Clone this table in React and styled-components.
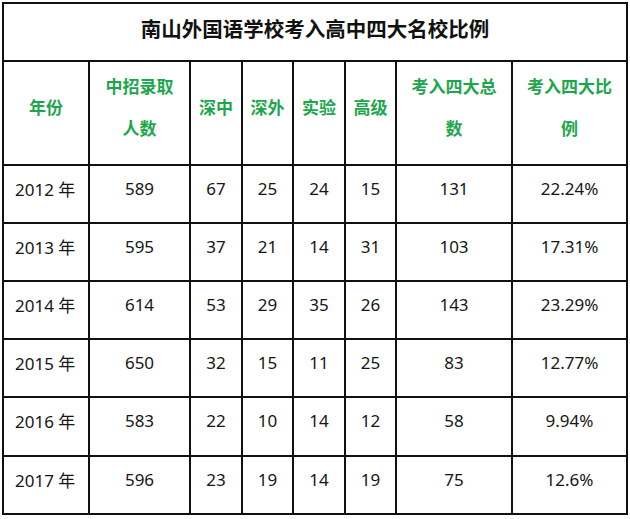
import React from "react";
import styled, { createGlobalStyle } from "styled-components";

const Global = createGlobalStyle`
  html, body { margin: 0; padding: 0; background: #fff; }
  body { font-family: "Noto Sans", "Noto Sans CJK SC", sans-serif; }
`;

const Page = styled.div`
  padding: 2px 0 0 2px;
`;

const Table = styled.table`
  border-collapse: collapse;
  table-layout: fixed;
  width: 624px;
  border: 2px solid #111;
`;

const TitleCell = styled.td`
  border: 2px solid #111;
  height: 58px;
  padding: 0 0 9px;
  box-sizing: border-box;
  text-align: center;
  vertical-align: middle;
  font-family: "Noto Sans CJK SC", sans-serif;
  font-weight: 700;
  font-size: 20.5px;
  color: #111;
`;

const HeadCell = styled.th`
  border: 2px solid #111;
  height: 104px;
  padding: 0 0 12px;
  box-sizing: border-box;
  text-align: center;
  vertical-align: middle;
  font-family: "Noto Sans CJK SC", sans-serif;
  font-weight: 700;
  font-size: 17px;
  line-height: 42px;
  color: #1ea64c;
`;

const Cell = styled.td`
  border: 2px solid #111;
  height: ${(p) => p.$h || 58}px;
  padding: 0 0 12px ${(p) => (p.$left ? "11px" : "0")};
  box-sizing: border-box;
  text-align: ${(p) => (p.$left ? "left" : "center")};
  vertical-align: middle;
  font-family: "Noto Sans", "Noto Sans CJK SC", sans-serif;
  font-size: 17px;
  color: #161616;
  white-space: nowrap;
`;

const widths = [86, 101, 52, 51, 52, 51, 116, 115];

const headers = [
  ["年份"],
  ["中招录取", "人数"],
  ["深中"],
  ["深外"],
  ["实验"],
  ["高级"],
  ["考入四大总", "数"],
  ["考入四大比", "例"],
];

const rows = [
  ["2012 年", "589", "67", "25", "24", "15", "131", "22.24%"],
  ["2013 年", "595", "37", "21", "14", "31", "103", "17.31%"],
  ["2014 年", "614", "53", "29", "35", "26", "143", "23.29%"],
  ["2015 年", "650", "32", "15", "11", "25", "83", "12.77%"],
  ["2016 年", "583", "22", "10", "14", "12", "58", "9.94%"],
  ["2017 年", "596", "23", "19", "14", "19", "75", "12.6%"],
];

export default function App() {
  return (
    <Page>
      <Global />
      <Table>
        <colgroup>
          {widths.map((w, i) => (
            <col key={i} style={{ width: w }} />
          ))}
        </colgroup>
        <tbody>
          <tr>
            <TitleCell colSpan={8}>南山外国语学校考入高中四大名校比例</TitleCell>
          </tr>
          <tr>
            {headers.map((h, i) => (
              <HeadCell key={i}>
                {h.map((line, j) => (
                  <React.Fragment key={j}>
                    {j > 0 && <br />}
                    {line}
                  </React.Fragment>
                ))}
              </HeadCell>
            ))}
          </tr>
          {rows.map((r, i) => (
            <tr key={i}>
              {r.map((v, j) => (
                <Cell key={j} $left={j === 0} $h={i === 4 ? 59 : 58}>
                  {v}
                </Cell>
              ))}
            </tr>
          ))}
        </tbody>
      </Table>
    </Page>
  );
}
